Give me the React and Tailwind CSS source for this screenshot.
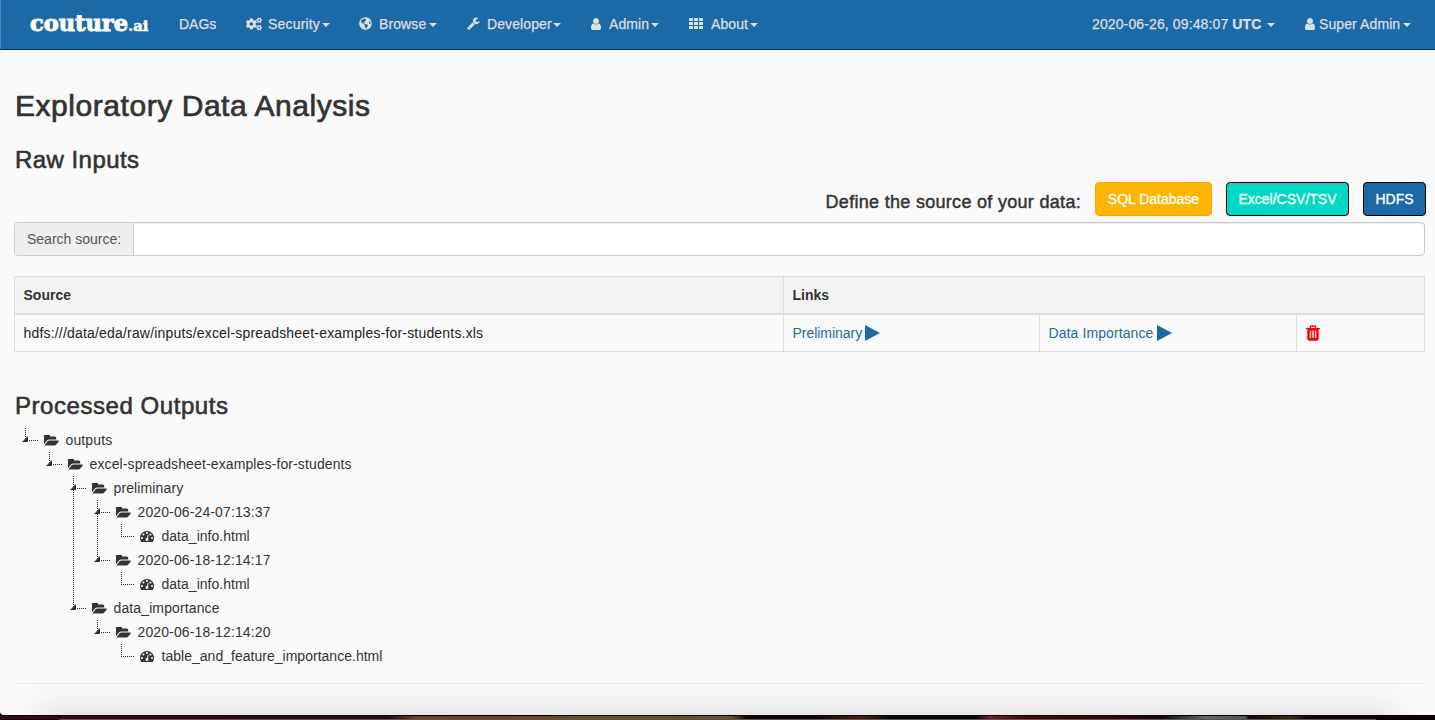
import React from "react";
import { FaCogs, FaGlobeAmericas } from "react-icons/fa";

const PATHS = {
  folder:
    "M1879 952q0 31-31 66l-336 396q-43 51-120.5 86.5t-143.5 35.5h-1088q-34 0-60.5-13t-26.5-43q0-31 31-66l336-396q43-51 120.5-86.5t143.5-35.5h1088q34 0 60.5 13t26.5 43zm-343-344v160h-832q-94 0-197 47.5t-164 119.5l-337 396-5 6q0-4-.5-12.5t-.5-12.5v-960q0-92 66-158t158-66h320q92 0 158 66t66 158v32h544q92 0 158 66t66 158z",
  user:
    "M1536 1399q0 109-62.5 187t-150.5 78h-854q-88 0-150.5-78t-62.5-187q0-85 8.5-160.5t31.5-152 58.5-131 94-89 134.5-34.5q131 128 313 128t313-128q76 0 134.5 34.5t94 89 58.5 131 31.5 152 8.5 160.5zm-256-887q0 159-112.5 271.5t-271.5 112.5-271.5-112.5-112.5-271.5 112.5-271.5 271.5-112.5 271.5 112.5 112.5 271.5z",
  gauge:
    "M384 1152q0-53-37.5-90.5t-90.5-37.5-90.5 37.5-37.5 90.5 37.5 90.5 90.5 37.5 90.5-37.5 37.5-90.5zm192-448q0-53-37.5-90.5t-90.5-37.5-90.5 37.5-37.5 90.5 37.5 90.5 90.5 37.5 90.5-37.5 37.5-90.5zm428 481l101-382q6-26-7.5-48.5t-38.5-29.5-48 6.5-30 39.5l-101 382q-60 5-107 43.5t-63 98.5q-20 77 20 146t117 89 146-20 89-117q16-60-6-117t-72-91zm660-33q0-53-37.5-90.5t-90.5-37.5-90.5 37.5-37.5 90.5 37.5 90.5 90.5 37.5 90.5-37.5 37.5-90.5zm-640-640q0-53-37.5-90.5t-90.5-37.5-90.5 37.5-37.5 90.5 37.5 90.5 90.5 37.5 90.5-37.5 37.5-90.5zm448 192q0-53-37.5-90.5t-90.5-37.5-90.5 37.5-37.5 90.5 37.5 90.5 90.5 37.5 90.5-37.5 37.5-90.5zm320 448q0 261-141 483-19 29-54 29h-1402q-35 0-54-29-141-221-141-483 0-182 71-348t191-286 286-191 348-71 348 71 286 191 191 286 71 348z",
  wrench:
    "M448 1472q0-26-19-45t-45-19-45 19-19 45 19 45 45 19 45-19 19-45zm644-420l-682 682q-37 37-90 37-52 0-91-37l-106-108q-38-36-38-90 0-53 38-91l681-681q39 98 114.5 173.5t173.5 114.5zm634-435q0 39-23 106-47 134-164.5 217.5t-258.5 83.5q-185 0-316.5-131.5t-131.5-316.5 131.5-316.5 316.5-131.5q58 0 121.5 16.5t107.5 46.5q16 11 16 28t-16 28l-293 169v224l193 107q5-3 79-48.5t135.5-81 70.5-35.5q15 0 23.5 10t8.5 25z",
  trash:
    "M704 1376v-704q0-14-9-23t-23-9h-64q-14 0-23 9t-9 23v704q0 14 9 23t23 9h64q14 0 23-9t9-23zm256 0v-704q0-14-9-23t-23-9h-64q-14 0-23 9t-9 23v704q0 14 9 23t23 9h64q14 0 23-9t9-23zm256 0v-704q0-14-9-23t-23-9h-64q-14 0-23 9t-9 23v704q0 14 9 23t23 9h64q14 0 23-9t9-23zm-544-992h448l-48-117q-7-9-17-11h-317q-10 2-17 11zm928 32v64q0 14-9 23t-23 9h-96v948q0 83-47 143.5t-113 60.5h-832q-66 0-113-58.5t-47-141.5v-952h-96q-14 0-23-9t-9-23v-64q0-14 9-23t23-9h309l70-167q15-37 54-63t79-26h320q40 0 79 26t54 63l70 167h309q14 0 23 9t9 23z",
};

function Glyph({ name, box, className }) {
  return (
    <svg viewBox={box} className={className} fill="currentColor">
      <path d={PATHS[name]} />
    </svg>
  );
}

function Grid() {
  return (
    <svg viewBox="0 0 14 11" className="h-[11px] w-3.5" fill="currentColor">
      {[0, 4, 8].map((y) =>
        [0, 5, 10].map((x) => <rect key={`${x}-${y}`} x={x} y={y} width="4" height="3" rx="0.5" />)
      )}
    </svg>
  );
}

function Caret() {
  return (
    <svg viewBox="0 0 8 4" className="mt-0.5 h-1 w-2 shrink-0" fill="currentColor">
      <path d="M0 0h8L4 4z" />
    </svg>
  );
}

const MENU = [
  { label: "Security", icon: <FaCogs className="h-4 w-4" />, box: "w-[22px]", text: "w-[54px] tracking-[0.18px]", item: "w-[113px]" },
  { label: "Browse", icon: <FaGlobeAmericas className="h-[13px] w-[13px]" />, box: "w-5", text: "w-[50px] tracking-[0.1px]", item: "w-[108px]" },
  { label: "Developer", icon: <Glyph name="wrench" box="64 64 1700 1720" className="h-[13px] w-[13px]" />, box: "w-5", text: "w-[66px] tracking-[0.1px]", item: "w-[124px]" },
  { label: "Admin", icon: <Glyph name="user" box="256 128 1280 1536" className="h-3 w-[10px]" />, box: "w-[18px]", text: "w-[42px] tracking-[0.1px]", item: "w-[98px]" },
  { label: "About", icon: <Grid />, box: "w-[22px]", text: "w-[39px] tracking-[0.1px]", item: "w-[90px]" },
];

function Navbar() {
  return (
    <nav className="relative flex h-[50px] items-center border-b border-[#0b3062] bg-[#1c69a8] text-[#dddfe2] shadow-[inset_1px_0_0_#4a88ba] [-webkit-text-stroke:0.25px]">
      <svg className="ml-[29px] h-8 w-[121px] text-white" viewBox="0 0 121 32">
        <g fill="currentColor" stroke="currentColor" fontFamily="DejaVu Serif" fontWeight="700">
          <text x="1" y="22" fontSize="22.5" strokeWidth="1" textLength="98" lengthAdjust="spacingAndGlyphs">couture</text>
          <text x="99" y="22" fontSize="14.5" strokeWidth="0.5" textLength="20.5" lengthAdjust="spacingAndGlyphs">.ai</text>
        </g>
      </svg>
      <span className="ml-[29px] w-[67px] pb-0.5">DAGs</span>
      {MENU.map((m) => (
        <div key={m.label} className={`flex shrink-0 items-center pb-0.5 ${m.item}`}>
          <span className={`shrink-0 ${m.box}`}>{m.icon}</span>
          <span className={`shrink-0 whitespace-nowrap ${m.text}`}>{m.label}</span>
          <Caret />
        </div>
      ))}
      <div className="ml-auto mr-[24px] flex items-center pb-0.5">
        <span className="w-[175px] whitespace-nowrap tracking-[0.12px]">
          2020-06-26, 09:48:07 <b>UTC</b>
        </span>
        <Caret />
        <Glyph name="user" box="256 128 1280 1536" className="ml-[30px] h-3 w-[10px]" />
        <span className="ml-1 w-[84px] whitespace-nowrap tracking-[0.1px]">Super Admin</span>
        <Caret />
      </div>
    </nav>
  );
}

const TREE = [
  { depth: 0, label: "outputs" },
  { depth: 1, label: "excel-spreadsheet-examples-for-students" },
  { depth: 2, label: "preliminary", more: true },
  { depth: 3, label: "2020-06-24-07:13:37", more: true, guides: [2] },
  { depth: 4, label: "data_info.html", leaf: true, guides: [2, 3] },
  { depth: 3, label: "2020-06-18-12:14:17", guides: [2] },
  { depth: 4, label: "data_info.html", leaf: true, guides: [2] },
  { depth: 2, label: "data_importance" },
  { depth: 3, label: "2020-06-18-12:14:20" },
  { depth: 4, label: "table_and_feature_importance.html", leaf: true },
];

function Connector({ leaf, more }) {
  return (
    <svg className="h-6 w-[30px] shrink-0" viewBox="0 0 30 24" shapeRendering="crispEdges">
      <path d={more ? "M11.5 0V24" : "M11.5 0V13"} stroke="#222" strokeDasharray="1 1" />
      <path d="M11 12.5H24" stroke="#222" strokeDasharray="1 1" />
      {!leaf && <path d="M8 14h6V8z" fill="#333" shapeRendering="auto" />}
    </svg>
  );
}

function TreeRow({ depth, label, leaf, more, guides = [] }) {
  return (
    <li className="flex h-6 items-center">
      {Array.from({ length: depth }, (_, i) => (
        <svg key={i} className="h-6 w-6 shrink-0" viewBox="0 0 24 24" shapeRendering="crispEdges">
          {guides.includes(i) && <path d="M11.5 0V24" stroke="#222" strokeDasharray="1 1" />}
        </svg>
      ))}
      <Connector leaf={leaf} more={more} />
      <span className="w-[21.5px] shrink-0">
        {leaf ? (
          <Glyph name="gauge" box="0 128 1792 1536" className="h-3 w-3.5" />
        ) : (
          <Glyph name="folder" box="0 256 1879 1280" className="h-[11px] w-[15px]" />
        )}
      </span>
      <span className={leaf ? "tracking-[0.02px]" : "tracking-[0.12px]"}>{label}</span>
    </li>
  );
}

function Play() {
  return (
    <svg viewBox="0 0 15 16" className="ml-[3px] h-4 w-[15px]" fill="currentColor">
      <path d="M0 0L15 8L0 16z" />
    </svg>
  );
}

export default function App() {
  return (
    <div className="flex h-[720px] w-[1435px] flex-col overflow-hidden bg-black font-['Liberation_Sans',Arial,sans-serif] text-[14px] leading-5 text-[#333]">
      <div className="relative h-[715px] shrink-0 overflow-hidden rounded-bl-[4px] bg-[#fafafa]">
        <div className="absolute bottom-0 left-[20px] right-[20px] h-[38px] bg-linear-to-b from-transparent via-black/[0.02] to-black/[0.075] mask-x-from-97% mask-x-to-100%" />
        <Navbar />
        <main className="relative pl-[14px] pr-[10px]">
          <h2 className="mt-[39px] pl-px text-[30px] leading-[34px] tracking-[0.55px] [-webkit-text-stroke:0.7px]">Exploratory Data Analysis</h2>
          <h3 className="mt-[23px] pl-px text-[24px] leading-[27px] tracking-[0.45px] [-webkit-text-stroke:0.6px]">Raw Inputs</h3>
          <div className="-mr-px mt-[9px] flex h-[34px] justify-end gap-[14px]">
            <span className="flex items-center pt-1.5 text-[18px] tracking-[0.3px] [-webkit-text-stroke:0.45px]">Define the source of your data:</span>
            <button className="w-[117px] whitespace-nowrap rounded border border-[#f4a708] bg-[#ffb400] text-white [-webkit-text-stroke:0.3px]">SQL Database</button>
            <button className="w-[123px] whitespace-nowrap rounded border border-black bg-[#00d8c6] text-white [-webkit-text-stroke:0.3px]">Excel/CSV/TSV</button>
            <button className="w-[63px] whitespace-nowrap rounded border border-black bg-[#1c69a8] text-white [-webkit-text-stroke:0.3px]">HDFS</button>
          </div>
          <div className="mt-1.5 flex h-[34px] overflow-hidden rounded border border-[#ccc] bg-white">
            <span className="flex w-[119px] shrink-0 items-center border-r border-[#ccc] bg-[#eee] pl-3 text-[#555]">Search source:</span>
            <input className="min-w-0 flex-1 shadow-[inset_0_1px_1px_rgba(0,0,0,0.075)] outline-none" />
          </div>
          <div className="mt-5 grid h-[76px] grid-cols-[769px_256px_257px_1fr] grid-rows-[39px_37px] border-r border-[#ddd]">
            <div className="border-b-2 border-l border-t border-[#ddd] bg-[#f3f3f3] pl-[8.5px] pt-2 font-bold">Source</div>
            <div className="col-span-3 border-b-2 border-l border-t border-[#ddd] bg-[#f3f3f3] pl-[8.5px] pt-2 font-bold">Links</div>
            <div className="border-b border-l border-[#ddd] pl-[8.5px] pt-2 tracking-[0.185px] text-[#222]">
              hdfs:///data/eda/raw/inputs/excel-spreadsheet-examples-for-students.xls
            </div>
            <div className="flex items-center border-b border-l border-[#ddd] pl-[8.5px] tracking-[-0.03px] text-[#1c69a8]">Preliminary<Play /></div>
            <div className="flex items-center border-b border-l border-[#ddd] pl-[8.5px] tracking-[0.1px] text-[#1c69a8]">Data Importance<Play /></div>
            <div className="flex items-center border-b border-l border-[#ddd] pl-[9px] text-[#f00]">
              <Glyph name="trash" box="192 128 1408 1536" className="h-4 w-[14px]" />
            </div>
          </div>
          <h3 className="mt-10 pl-px text-[24px] leading-[27px] tracking-[0.55px] [-webkit-text-stroke:0.6px]">Processed Outputs</h3>
          <ul className="mt-[9px]">
            {TREE.map((node, i) => (
              <TreeRow key={i} {...node} />
            ))}
          </ul>
          <div className="-mr-px mt-[15px] h-px bg-[#ebebeb]" />
        </main>
      </div>
      <div className="mt-px h-[3px] bg-linear-to-r from-[#3c0522] from-0% via-[#2a0618] via-26% to-[#120308]">
        <div className="h-full bg-[linear-gradient(90deg,transparent_27%,#6b4325_29%,#69502c_51%,#120604_52%,#120604_57%,#4a2010_60%,#08060a_62%,#100210_68%,#6a2828_69%,#500408_71%,#260408_80%,#160608_81%,#666_84%,#555_86.8%,#150505_87%,#3a2a15_90%,#160508_91%,#10000c_100%)]" />
      </div>
      <div className="mx-[59px] h-px bg-[#555]" />
    </div>
  );
}
